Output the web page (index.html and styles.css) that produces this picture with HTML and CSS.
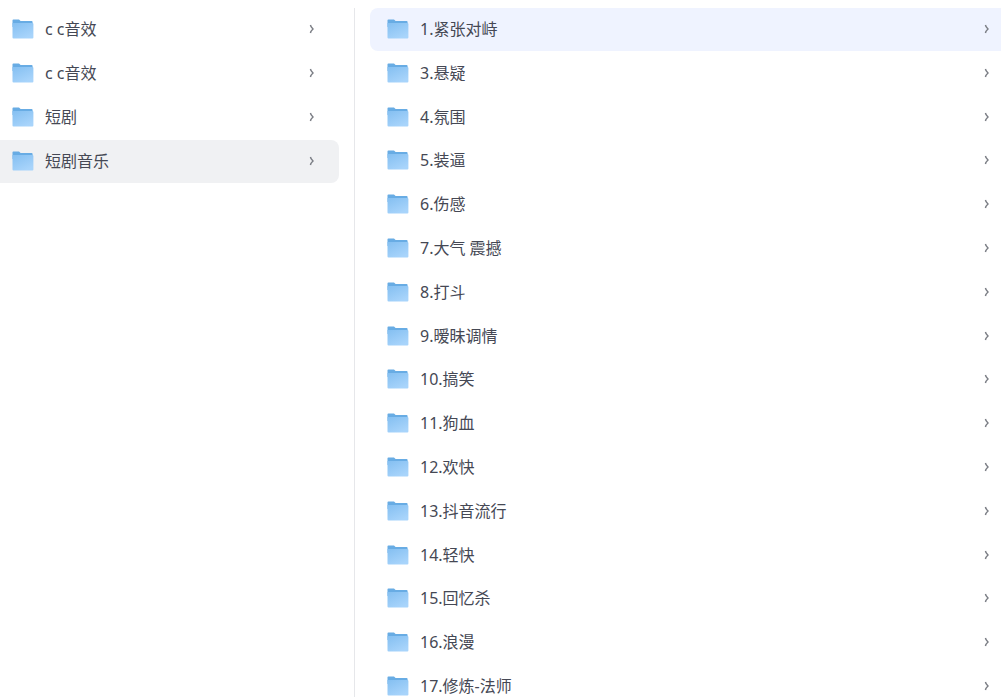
FILE: index.html
```
<!DOCTYPE html>
<html lang="zh-CN">
<head>
    <meta charset="UTF-8">
    <meta name="viewport" content="width=device-width, initial-scale=1.0">
    <title>短剧音乐</title>
    <link rel="stylesheet" href="styles.css">
</head>
<body>
    <svg width="0" height="0" class="sprite" aria-hidden="true">
        <defs>
            <linearGradient id="front" x1="0" y1="0" x2="0.6" y2="1">
                <stop offset="0" stop-color="#84bff1"/>
                <stop offset="1" stop-color="#a8d4fb"/>
            </linearGradient>
        </defs>
        <symbol id="folder" viewBox="0 0 22 20">
            <path d="M0.5 1.2Q0.5 0.4 1.4 0.4H7L8.6 2H19.6Q20.6 2 20.6 3V8H0.5Z" fill="#68ace4"/>
            <path d="M0.5 4H20.4Q21.4 4 21.4 5V18.4Q21.4 19.4 20.4 19.4H1.5Q0.5 19.4 0.5 18.4Z" fill="url(#front)"/>
        </symbol>
        <symbol id="arrow" viewBox="0 0 6 10">
            <path d="M1.4 1Q1.8 3 4 5Q1.8 7 1.4 9" fill="none" stroke="currentColor" stroke-width="1.4"/>
        </symbol>
    </svg>

    <div class="browser">
        <nav class="folders" id="carpetas"></nav>
        <main class="content" id="contenido"></main>
    </div>

    <script>
        const folders = ["c c音效", "c c音效", "短剧", "短剧音乐"];
        const items = [
            "1.紧张对峙", "3.悬疑", "4.氛围", "5.装逼", "6.伤感", "7.大气 震撼",
            "8.打斗", "9.暧昧调情", "10.搞笑", "11.狗血", "12.欢快", "13.抖音流行",
            "14.轻快", "15.回忆杀", "16.浪漫", "17.修炼-法师"
        ];

        function fillList(id, names, active) {
            document.getElementById(id).innerHTML = names.map((name, i) => `
                <a href="#" class="row${i === active ? " active" : ""}">
                    <svg class="folder"><use href="#folder"/></svg>
                    <span class="name">${name}</span>
                    <svg class="arrow"><use href="#arrow"/></svg>
                </a>
            `).join("");
        }

        fillList("carpetas", folders, 3);
        fillList("contenido", items, 0);
    </script>
</body>
</html>
```

FILE: styles.css
```
* {
    box-sizing: border-box;
}
body {
    margin: 0;
    background-color: #fff;
    color: #454854;
    font-family: "Noto Sans", "Noto Sans CJK SC", sans-serif;
    font-size: 16px;
    line-height: 24px;
}
.sprite {
    display: block;
}
.browser {
    display: flex;
    height: 100vh;
    padding-top: 8px;
    overflow: hidden;
}
.folders {
    display: flex;
    flex-direction: column;
    gap: 1px;
    width: 355px;
    flex-shrink: 0;
    padding-right: 15px;
    border-right: 1px solid #e6e7ea;
}
.content {
    display: flex;
    flex: 1;
    flex-direction: column;
    justify-content: space-between;
    margin-left: 15px;
    /* the last row runs past the bottom edge */
    margin-bottom: -11px;
}
.row {
    display: flex;
    align-items: center;
    flex-shrink: 0;
    height: 43px;
    padding-bottom: 1px;
    color: inherit;
    text-decoration: none;
}
.folders .row {
    padding-left: 12px;
    padding-right: 24px;
    border-radius: 0 8px 8px 0;
}
.content .row {
    padding-left: 17px;
    padding-right: 11px;
    border-radius: 8px 0 0 8px;
}
.folders .active {
    background-color: #f0f1f3;
}
.content .active {
    background-color: #eff3ff;
}
.folder {
    width: 22px;
    height: 20px;
    margin-right: 11px;
}
.name {
    flex: 1;
}
.arrow {
    width: 6px;
    height: 10px;
    color: #7b7e85;
}
```
